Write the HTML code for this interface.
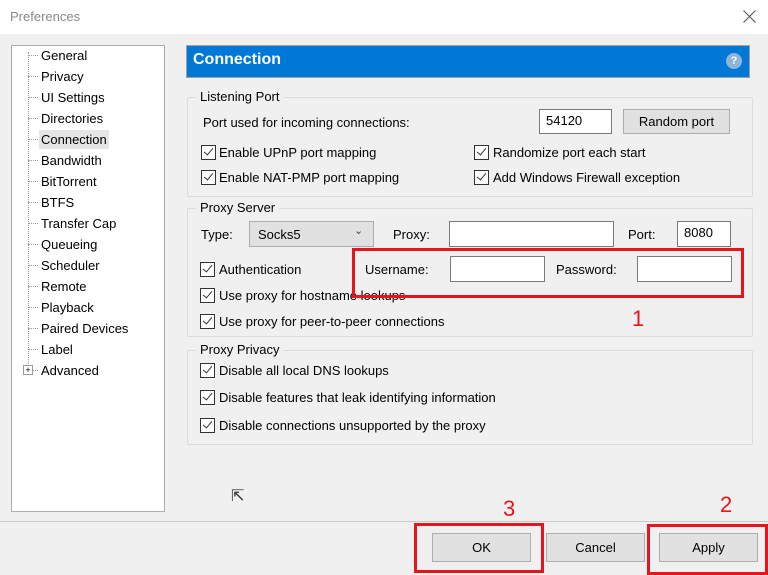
<!DOCTYPE html><html><head><style>
body{margin:0;width:768px;height:575px;background:#f0f0f0;font-family:"Liberation Sans",sans-serif;font-size:13px;color:#000;position:relative;overflow:hidden}
.a{position:absolute;white-space:nowrap}
.tb{position:absolute;left:0;top:0;width:768px;height:34px;background:#fff}
.grp{position:absolute;border:1px solid #dcdcdc;border-radius:2px}
.gl{position:absolute;background:#f0f0f0;padding:0 4px;top:-9px;left:8px}
.cb{position:absolute;width:13px;height:13px;border:1px solid #333;background:#fff}
.cb:after{content:"";position:absolute;left:4px;top:0px;width:4px;height:8px;border:solid #333;border-width:0 1.5px 1.5px 0;transform:rotate(40deg)}
.in{position:absolute;background:#fff;border:1px solid #7a7a7a;box-sizing:border-box;padding:3px 6px}
.btn{position:absolute;background:#e1e1e1;border:1px solid #adadad;box-sizing:border-box;text-align:center;line-height:27px}
.red{position:absolute;border:3px solid #e8141c;box-sizing:border-box}
.num{position:absolute;color:#e8141c;font-size:22px}
.tree div{position:absolute;left:29px}
.tree span{position:absolute;left:16px;top:8px;width:10px;border-top:1px dotted #999}
</style></head><body>
<div class="tb"></div>
<div class="a" style="left:10px;top:9px;color:#888;font-size:13px">Preferences</div>
<svg style="position:absolute;left:743px;top:10px" width="13" height="13"><path d="M0.5 0.5L12.5 12.5M12.5 0.5L0.5 12.5" stroke="#555" stroke-width="1.1"/></svg>

<div class="tree" style="position:absolute;left:11px;top:45px;width:152px;height:465px;background:#fff;border:1px solid #adadad">
<div style="position:absolute;left:16px;top:6px;height:318px;border-left:1px dotted #999"></div>
<span style="top:9px"></span><div style="top:2px">General</div>
<span style="top:30px"></span><div style="top:23px">Privacy</div>
<span style="top:51px"></span><div style="top:44px">UI Settings</div>
<span style="top:72px"></span><div style="top:65px">Directories</div>
<span style="top:93px"></span><div style="top:84px;background:#e5e5e5;padding:2px 2px;left:27px">Connection</div>
<span style="top:114px"></span><div style="top:107px">Bandwidth</div>
<span style="top:135px"></span><div style="top:128px">BitTorrent</div>
<span style="top:156px"></span><div style="top:149px">BTFS</div>
<span style="top:177px"></span><div style="top:170px">Transfer Cap</div>
<span style="top:198px"></span><div style="top:191px">Queueing</div>
<span style="top:219px"></span><div style="top:212px">Scheduler</div>
<span style="top:240px"></span><div style="top:233px">Remote</div>
<span style="top:261px"></span><div style="top:254px">Playback</div>
<span style="top:282px"></span><div style="top:275px">Paired Devices</div>
<span style="top:303px"></span><div style="top:296px">Label</div>
<span style="top:324px"></span><div style="top:317px">Advanced</div>
<div style="left:11px;top:319px;width:8px;height:8px;border:1px solid #999;background:#fff;font-size:9px;line-height:8px;text-align:center">+</div>
</div>

<div style="position:absolute;left:186px;top:45px;width:564px;height:33px;background:#0078d7;border:1px solid #a0a0a0;box-sizing:border-box"></div>
<div class="a" style="left:193px;top:51px;color:#fff;font-weight:bold;font-size:16px">Connection</div>
<div class="a" style="left:726px;top:53px;width:16px;height:16px;border-radius:50%;background:#8fb4d8;color:#fff;font-size:11px;font-weight:bold;text-align:center;line-height:16px">?</div>

<div class="grp" style="left:187px;top:97px;width:564px;height:98px"><div class="gl">Listening Port</div></div>
<div class="a" style="left:203px;top:115px">Port used for incoming connections:</div>
<div class="in" style="left:539px;top:109px;width:73px;height:25px">54120</div>
<div class="btn" style="left:623px;top:109px;width:107px;height:25px;line-height:23px">Random port</div>
<div class="cb" style="left:201px;top:145px"></div><div class="a" style="left:219px;top:145px">Enable UPnP port mapping</div>
<div class="cb" style="left:201px;top:170px"></div><div class="a" style="left:219px;top:170px">Enable NAT-PMP port mapping</div>
<div class="cb" style="left:474px;top:145px;"></div><div class="a" style="left:493px;top:145px">Randomize port each start</div>
<div class="cb" style="left:474px;top:170px"></div><div class="a" style="left:493px;top:170px">Add Windows Firewall exception</div>

<div class="grp" style="left:187px;top:208px;width:564px;height:127px"><div class="gl">Proxy Server</div></div>
<div class="a" style="left:201px;top:227px">Type:</div>
<div style="position:absolute;left:249px;top:221px;width:125px;height:26px;background:#e1e1e1;border:1px solid #adadad;box-sizing:border-box"></div>
<div class="a" style="left:258px;top:227px">Socks5</div>
<div class="a" style="left:354px;top:224px;font-size:11px;color:#444">⌄</div>
<div class="a" style="left:393px;top:227px">Proxy:</div>
<div class="in" style="left:449px;top:221px;width:165px;height:26px"></div>
<div class="a" style="left:628px;top:227px">Port:</div>
<div class="in" style="left:677px;top:221px;width:54px;height:26px">8080</div>
<div class="cb" style="left:200px;top:262px"></div><div class="a" style="left:219px;top:262px">Authentication</div>
<div class="a" style="left:365px;top:262px">Username:</div>
<div class="in" style="left:450px;top:256px;width:95px;height:26px"></div>
<div class="a" style="left:556px;top:262px">Password:</div>
<div class="in" style="left:637px;top:256px;width:95px;height:26px"></div>
<div class="cb" style="left:200px;top:288px"></div><div class="a" style="left:219px;top:288px">Use proxy for hostname lookups</div>
<div class="cb" style="left:200px;top:314px"></div><div class="a" style="left:219px;top:314px">Use proxy for peer-to-peer connections</div>

<div class="grp" style="left:187px;top:350px;width:564px;height:93px"><div class="gl">Proxy Privacy</div></div>
<div class="cb" style="left:200px;top:363px"></div><div class="a" style="left:219px;top:363px">Disable all local DNS lookups</div>
<div class="cb" style="left:200px;top:390px"></div><div class="a" style="left:219px;top:390px">Disable features that leak identifying information</div>
<div class="cb" style="left:200px;top:418px"></div><div class="a" style="left:219px;top:418px">Disable connections unsupported by the proxy</div>

<div class="a" style="left:231px;top:486px;font-size:16px;color:#333">⇱</div>

<div style="position:absolute;left:0;top:521px;width:768px;height:1px;background:#c8c8c8"></div>
<div class="btn" style="left:432px;top:533px;width:99px;height:29px">OK</div>
<div class="btn" style="left:546px;top:533px;width:99px;height:29px">Cancel</div>
<div class="btn" style="left:659px;top:533px;width:99px;height:29px">Apply</div>

<div class="red" style="left:352px;top:248px;width:392px;height:50px"></div>
<div class="red" style="left:414px;top:523px;width:130px;height:50px"></div>
<div class="red" style="left:647px;top:524px;width:121px;height:51px"></div>
<div class="num" style="left:632px;top:306px">1</div>
<div class="num" style="left:503px;top:496px">3</div>
<div class="num" style="left:720px;top:492px">2</div>
</body></html>
